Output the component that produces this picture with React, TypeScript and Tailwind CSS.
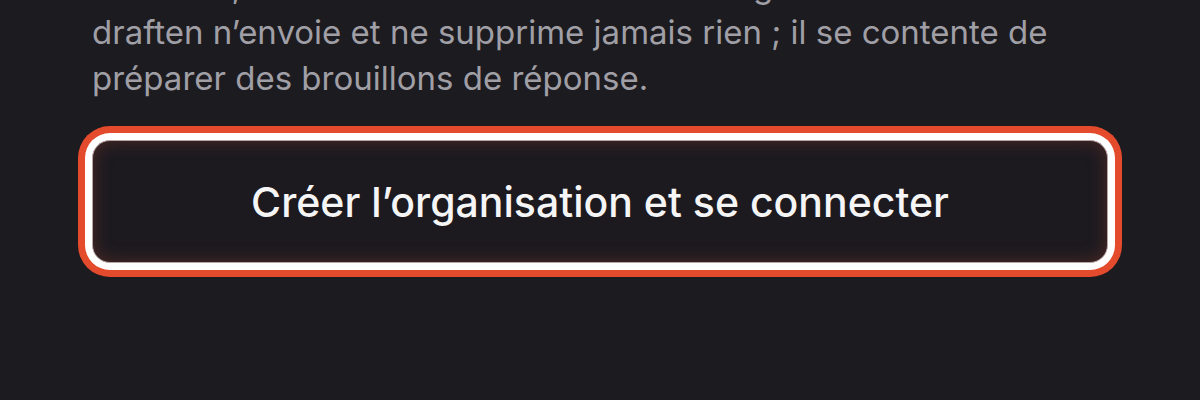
export default function App() {
  return (
    <div
      className="h-[400px] w-[1200px] overflow-hidden bg-[#1c1b20] px-[92px]"
      style={{ fontFamily: 'Inter, "Noto Sans", sans-serif' }}
    >
      <p className="mt-[-37px] whitespace-nowrap text-[33px] leading-[46px] text-[#a09fa6]">
        Attention, l’assistant lit vos derniers messages et le mode
        <br />
        draften n’envoie et ne supprime jamais rien ; il se contente de
        <br />
        préparer des brouillons de réponse.
      </p>
      <button
        type="button"
        className="mt-[39px] flex h-[123px] w-full items-center justify-center rounded-[18px] border border-[#b9a5a2] bg-[#1c1a1f] pt-[2px] text-[41px] font-medium text-[#f5f5f6] shadow-[inset_0_0_18px_rgba(170,70,55,0.35),0_0_0_7px_#ffffff,0_0_0_14px_#e44a2c]"
      >
        Créer l’organisation et se connecter
      </button>
    </div>
  );
}
